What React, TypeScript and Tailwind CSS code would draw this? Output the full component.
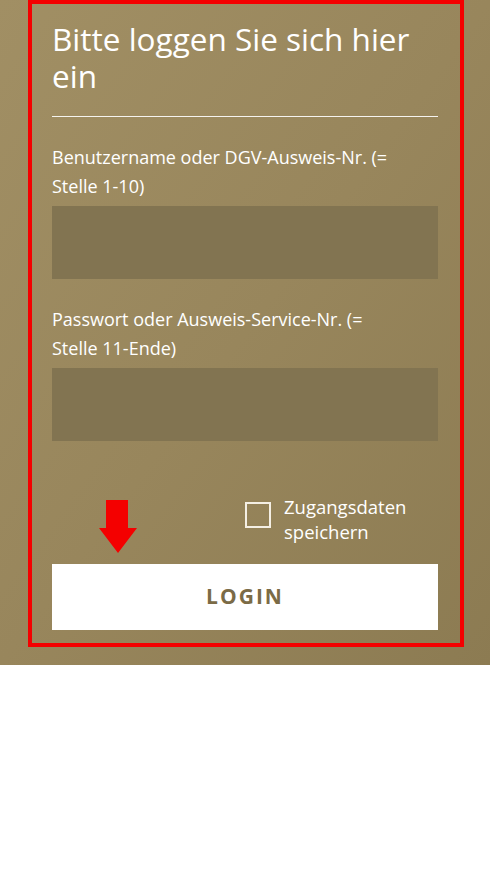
export default function App() {
  return (
    <div className="min-h-screen bg-white" style={{ fontFamily: '"Open Sans", "Liberation Sans", sans-serif' }}>
      <div className="h-[665px] w-full bg-gradient-to-br from-[#a18f64] via-[#98865c] to-[#8c7b52] pl-[28px]">
        <div className="relative w-[436px] h-[647px] border-4 border-[#f40000] pt-[16px] pl-[20px] pr-[22px]">
          <h1 className="text-[31.5px] leading-[37px] text-white">Bitte loggen Sie sich hier ein</h1>
          <div className="mt-[22px] h-px bg-white/90" />

          <label className="mt-[26px] block w-[355px] text-[18px] leading-[29px] text-white">
            Benutzername oder DGV-Ausweis-Nr. (= Stelle 1-10)
          </label>
          <input className="mt-[5px] block h-[73px] w-full bg-[#827451] outline-none" />

          <label className="mt-[26px] block w-[355px] text-[18px] leading-[29px] text-white">
            Passwort oder Ausweis-Service-Nr. (= Stelle 11-Ende)
          </label>
          <input type="password" className="mt-[5px] block h-[73px] w-full bg-[#827451] outline-none" />

          <div className="mt-[53px] grid grid-cols-2">
            <div />
            <label className="flex items-start gap-[13px]">
              <span className="mt-[8px] block h-[26px] w-[26px] shrink-0 border-2 border-[#f4efe4]" />
              <span className="text-[18.5px] leading-[25px] text-white">
                Zugangsdaten
                <br />
                speichern
              </span>
            </label>
          </div>

          <button className="mt-[20px] flex h-[66px] w-full items-center justify-center bg-white text-[21px] font-bold tracking-[2px] text-[#7b6b46]">
            LOGIN
          </button>

          {/* red arrow pointing at the button */}
          <svg className="absolute left-[67px] top-[496px]" width="38" height="53" viewBox="0 0 38 53">
            <path d="M7 0h22v28h9L19 53 0 28h7z" fill="#f40000" />
          </svg>
        </div>
      </div>
    </div>
  )
}
